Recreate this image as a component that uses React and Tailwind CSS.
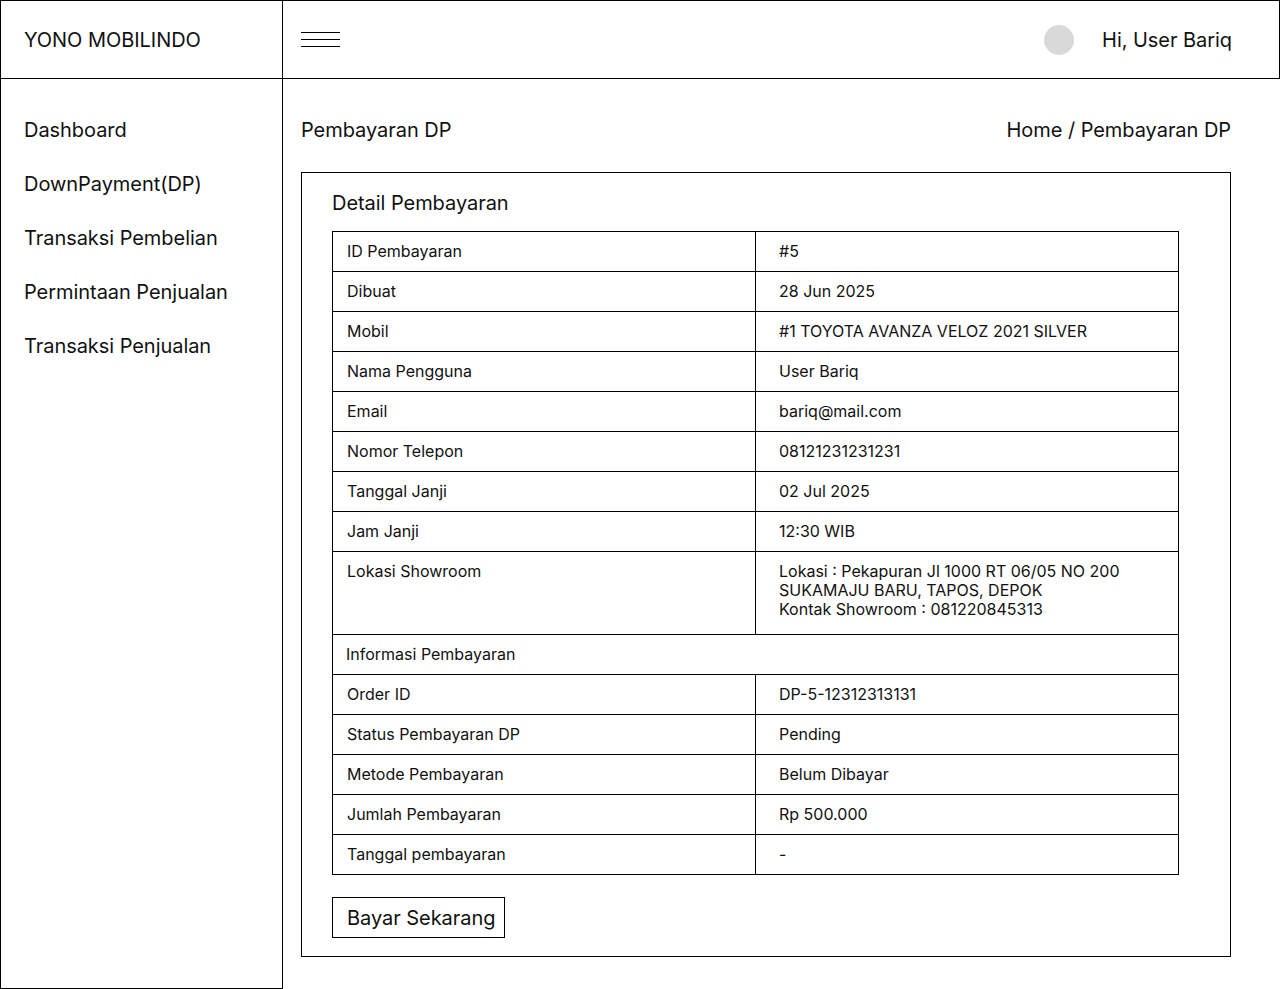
import React from 'react';

const menu = ['Dashboard', 'DownPayment(DP)', 'Transaksi Pembelian', 'Permintaan Penjualan', 'Transaksi Penjualan'];

const rows = [
  ['ID Pembayaran', '#5'],
  ['Dibuat', '28 Jun 2025'],
  ['Mobil', '#1 TOYOTA AVANZA VELOZ 2021 SILVER'],
  ['Nama Pengguna', 'User Bariq'],
  ['Email', 'bariq@mail.com'],
  ['Nomor Telepon', '08121231231231'],
  ['Tanggal Janji', '02 Jul 2025'],
  ['Jam Janji', '12:30 WIB'],
];

const payRows = [
  ['Order ID', 'DP-5-12312313131'],
  ['Status Pembayaran DP', 'Pending'],
  ['Metode Pembayaran', 'Belum Dibayar'],
  ['Jumlah Pembayaran', 'Rp 500.000'],
  ['Tanggal pembayaran', '-'],
];

function Row({ label, value, last }) {
  return (
    <div className={`flex ${last ? 'h-[39px]' : 'h-[40px] border-b border-black'}`}>
      <div className="w-[423px] border-r border-black pl-[14px] pb-px flex items-center">{label}</div>
      <div className="flex-1 pl-[23px] pb-px flex items-center">{value}</div>
    </div>
  );
}

export default function App() {
  return (
    <div className="w-[1280px] h-[989px] bg-white text-[#111] font-['Inter',sans-serif] flex flex-col">
      {/* Header */}
      <header className="h-[79px] border border-black flex tracking-[-0.05px]">
        <div className="w-[282px] border-r border-black flex items-center pl-[23px] text-[20px]">
          YONO MOBILINDO
        </div>
        <div className="flex-1 flex items-center justify-between pl-[18px] pr-[47px]">
          <div className="flex flex-col gap-[6px] w-[39px]">
            <span className="block h-px bg-black" />
            <span className="block h-px bg-black" />
            <span className="block h-px bg-black" />
          </div>
          <div className="flex items-center gap-[28px]">
            <div className="w-[30px] h-[30px] rounded-full bg-[#d9d9d9]" />
            <span className="text-[20px]">Hi, User Bariq</span>
          </div>
        </div>
      </header>

      <div className="flex flex-1">
        {/* Sidebar */}
        <aside className="w-[283px] border-l border-r border-b border-black pt-[24px] pl-[23px] tracking-[-0.05px]">
          {menu.map((m) => (
            <div key={m} className="h-[54px] flex items-center text-[20px]">{m}</div>
          ))}
        </aside>

        {/* Main */}
        <main className="flex-1 pl-[18px] pr-[49px] pt-[24px]">
          <div className="h-[54px] flex items-center justify-between text-[20px] tracking-[-0.05px]">
            <span>Pembayaran DP</span>
            <span>Home / Pembayaran DP</span>
          </div>

          <div className="mt-[15px] border border-black pl-[30px] pt-[16px] pb-[18px]">
            <h2 className="text-[20px] leading-[28px] tracking-[-0.05px]">Detail Pembayaran</h2>

            <div className="mt-[14px] w-[847px] border border-black text-[16px]">
              {rows.map(([l, v]) => (
                <Row key={l} label={l} value={v} />
              ))}
              <div className="flex h-[83px] border-b border-black">
                <div className="w-[423px] border-r border-black pl-[14px] pt-[10px] leading-[19px]">Lokasi Showroom</div>
                <div className="flex-1 pl-[23px] pt-[10px] leading-[19px]">
                  Lokasi : Pekapuran Jl 1000 RT 06/05 NO 200
                  <br />
                  SUKAMAJU BARU, TAPOS, DEPOK
                  <br />
                  Kontak Showroom : 081220845313
                </div>
              </div>
              <div className="h-[40px] border-b border-black pl-[13px] pb-px flex items-center">Informasi Pembayaran</div>
              {payRows.map(([l, v], i) => (
                <Row key={l} label={l} value={v} last={i === payRows.length - 1} />
              ))}
            </div>

            <button className="mt-[22px] h-[41px] w-[173px] border border-black pl-[14px] text-[20px] tracking-[-0.05px] flex items-center">
              Bayar Sekarang
            </button>
          </div>
        </main>
      </div>
    </div>
  );
}
